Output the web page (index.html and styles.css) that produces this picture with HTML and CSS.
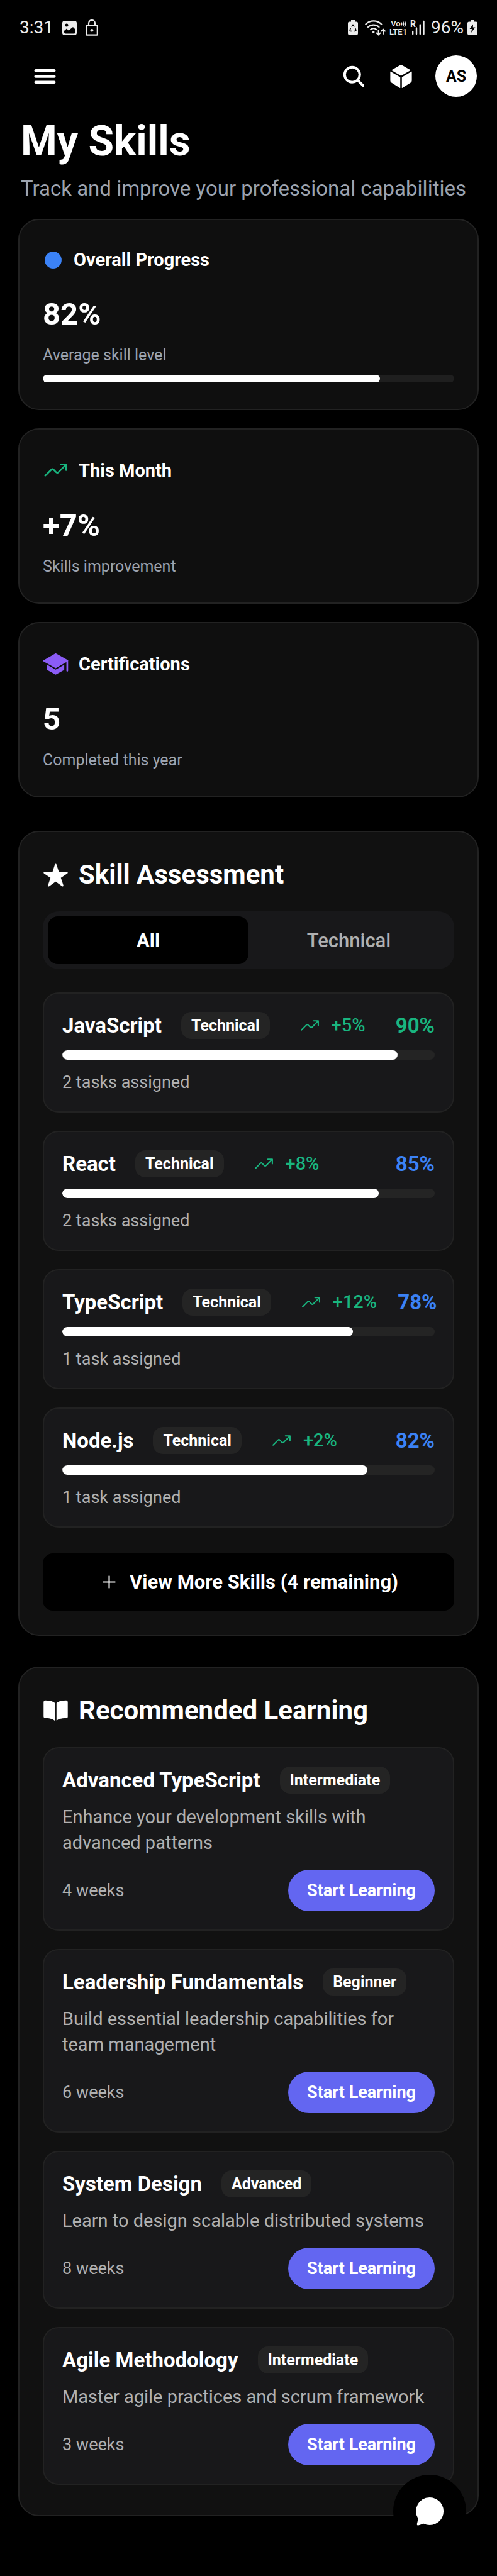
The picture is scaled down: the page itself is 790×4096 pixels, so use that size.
FILE: index.html
```html
<!DOCTYPE html>
<html lang="en">
<head>
<meta charset="utf-8">
<meta name="viewport" content="width=device-width, initial-scale=1">
<title>My Skills</title>
<link rel="stylesheet" href="styles.css">
</head>
<body>
<svg class="defs" aria-hidden="true">
  <symbol id="trend" viewBox="0 0 512 512"><g fill="none" stroke="currentColor" stroke-width="32" stroke-linecap="round" stroke-linejoin="round"><path d="M352 144h112v112"/><path d="M48 368l121.400-121.400a32 32 0 0145.200 0l50.800 50.800a32 32 0 0045.200 0L448 160"/></g></symbol>
</svg>
<div class="app">
  <div class="status">
    <div class="status-group status-left">
      <span class="status-text">3:31</span>
      <svg class="st-photo" viewBox="0 0 23 23"><rect width="23" height="23" rx="4" fill="#ececec"/><circle cx="7" cy="7" r="2.500" fill="#000"/><path d="M3 16l4-3.500 3 3L17 10l4 4v4a2.500 2.500 0 01-2.500 2.500h-13A2.500 2.500 0 013 18z" fill="#000"/></svg>
      <svg class="st-lock" viewBox="0 0 20 26"><rect x="1.200" y="9.700" width="17.600" height="15" rx="1.500" fill="none" stroke="#ececec" stroke-width="2.200"/><path d="M5 9.500V6a5 5 0 0110 0v3.500" fill="none" stroke="#ececec" stroke-width="2.200"/><circle cx="10" cy="17.200" r="2.300" fill="#ececec"/></svg>
    </div>
    <div class="status-group">
      <svg class="st-battery" viewBox="0 0 16 24"><path d="M5 0h6v2.500h2.500A2.500 2.500 0 0116 5v16a2.500 2.500 0 01-2.500 2.500h-11A2.500 2.500 0 010 21V5a2.500 2.500 0 012.500-2.500H5z" fill="#ececec"/><path d="M5.800 10.500L8 7.500l2.200 3M11.500 12.500l1.500 3.500-1.500 1.500H9M7 17.500H4L3 16l1.500-3.500" fill="none" stroke="#000" stroke-width="1.500"/></svg>
      <svg class="st-wifi" viewBox="0 0 33 25"><g fill="none" stroke="#ececec" stroke-width="2.200" stroke-linecap="round"><path d="M1.300 6.500a18 18 0 0125 0M5 11a13 13 0 0117.500 0M9 15a7.500 7.500 0 019.500 0"/><path d="M21.500 16v7M18.500 20.500l3 3 3-3M29 22v-7M26 17.500l3-3 3 3" stroke-width="1.900"/></g><circle cx="13.700" cy="19" r="1.800" fill="#ececec"/></svg>
      <div class="volte"><span class="volte-line">Vo<svg class="st-waves" viewBox="0 0 8 12"><path d="M1 3.500q1.500 2.500 0 5M3.500 2q2.500 4 0 8M6 1q3.200 5 0 10" fill="none" stroke="#ececec" stroke-width="1.300"/></svg></span><span class="volte-line">LTE1</span></div>
      <div class="signal"><span class="roam">R</span><svg class="st-bars" viewBox="0 0 22 24"><path d="M3.200 18v4M9 12.500V22M14.800 7.500V22M20.500 2v20" stroke="#ececec" stroke-width="2.400" stroke-linecap="round"/></svg></div>
      <span class="status-text status-pct">96%</span>
      <svg class="st-battery" viewBox="0 0 16 24"><path d="M5 0h6v2.500h2.500A2.500 2.500 0 0116 5v16a2.500 2.500 0 01-2.500 2.500h-11A2.500 2.500 0 010 21V5a2.500 2.500 0 012.500-2.500H5z" fill="#ececec"/><path d="M9 6.500L3.500 14H7l-1 6 6.500-8.500H8.800z" fill="#000"/></svg>
    </div>
  </div>

  <header class="topbar">
    <button class="icon-btn" aria-label="Menu"><svg class="i49" viewBox="0 0 512 512"><path d="M102 160h308M102 256h308M102 352h308" stroke="#fff" stroke-width="48" stroke-linecap="round"/></svg></button>
    <div class="top-actions">
      <button class="icon-btn" aria-label="Search"><svg class="i41" viewBox="0 0 512 512"><path fill="#fff" d="M456.690 421.390L362.600 327.300a173.810 173.810 0 0034.840-104.580C397.440 126.380 319.060 48 222.720 48S48 126.380 48 222.720s78.380 174.720 174.720 174.720A173.810 173.810 0 00327.300 362.600l94.090 94.090a25 25 0 0035.300-35.300zM97.920 222.720a124.800 124.800 0 11124.800 124.800 124.950 124.950 0 01-124.800-124.800z"/></svg></button>
      <button class="icon-btn" aria-label="Workspace"><svg class="i41" viewBox="0 0 512 512"><path fill="#fff" d="M440.900 136.300a4 4 0 000-6.910L288.160 40.650a64.140 64.140 0 00-64.330 0L71.120 129.390a4 4 0 000 6.910L254 243.880a4 4 0 004.060 0zM238 270.800L48 160a4 4 0 00-6 3.460v177.400a48 48 0 0023.840 41.390L234 487a4 4 0 006-3.460V274.270a4 4 0 00-2-3.470zM274 270.800a4 4 0 00-2 3.460V483.500a4 4 0 006 3.460l168.150-104.700A48 48 0 00470 340.860V163.460a4 4 0 00-6-3.460z"/></svg></button>
      <button class="avatar">AS</button>
    </div>
  </header>

  <main class="content">
    <h1 class="page-title">My Skills</h1>
    <p class="page-sub">Track and improve your professional capabilities</p>

    <div class="stats">
      <section class="card">
        <div class="card-head"><svg class="i33" viewBox="0 0 512 512"><circle cx="256" cy="256" r="208" fill="#3b82f6"/></svg><h2 class="card-title">Overall Progress</h2></div>
        <p class="card-value">82%</p>
        <p class="card-note">Average skill level</p>
        <div class="bar bar-slim" role="progressbar" aria-valuenow="82" aria-label="Overall Progress"><div class="fill" style="width:82%"></div></div>
      </section>
      <section class="card">
        <div class="card-head green"><svg class="i41"><use href="#trend"/></svg><h2 class="card-title">This Month</h2></div>
        <p class="card-value">+7%</p>
        <p class="card-note">Skills improvement</p>
      </section>
      <section class="card">
        <div class="card-head"><svg class="i41" viewBox="0 0 512 512"><g fill="#8b5cf6"><path d="M256 370.430L86 275v102.750l170 93.500 170-93.500V275l-170 95.430z"/><path d="M505 186L256 45.570 4 192q-6 5 0 10l252 142 213-122v172a16 16 0 0034 0V196q4-5 2-10z"/></g></svg><h2 class="card-title">Certifications</h2></div>
        <p class="card-value">5</p>
        <p class="card-note">Completed this year</p>
      </section>
    </div>

    <section class="panel panel-skills">
      <div class="panel-head"><svg class="i41" viewBox="0 0 512 512"><path fill="#fff" d="M394 480a16 16 0 01-9.390-3L256 383.760 127.390 477a16 16 0 01-24.550-18.080L153 310.350 23 221.200a16 16 0 019-29.200h160.380l48.400-148.950a16 16 0 0130.440 0l48.400 149H480a16 16 0 019.050 29.200L359 310.350l50.130 148.530A16 16 0 01394 480z"/></svg><h2 class="panel-title">Skill Assessment</h2></div>
      <div class="tabs" role="tablist">
        <button class="tab tab-on" role="tab" aria-selected="true">All</button>
        <button class="tab" role="tab" aria-selected="false">Technical</button>
      </div>
      <div class="list">
        <article class="item">
          <div class="skill-row"><div class="skill-main"><h3 class="item-title">JavaScript</h3><span class="pill">Technical</span><span class="trend"><svg class="i33s"><use href="#trend"/></svg>+5%</span></div><span class="score green">90%</span></div>
          <div class="bar" role="progressbar" aria-valuenow="90" aria-label="JavaScript"><div class="fill" style="width:90%"></div></div>
          <p class="meta">2 tasks assigned</p>
        </article>
        <article class="item">
          <div class="skill-row"><div class="skill-main"><h3 class="item-title">React</h3><span class="pill">Technical</span><span class="trend"><svg class="i33s"><use href="#trend"/></svg>+8%</span></div><span class="score">85%</span></div>
          <div class="bar" role="progressbar" aria-valuenow="85" aria-label="React"><div class="fill" style="width:85%"></div></div>
          <p class="meta">2 tasks assigned</p>
        </article>
        <article class="item">
          <div class="skill-row"><div class="skill-main"><h3 class="item-title">TypeScript</h3><span class="pill">Technical</span><span class="trend"><svg class="i33s"><use href="#trend"/></svg>+12%</span></div><span class="score">78%</span></div>
          <div class="bar" role="progressbar" aria-valuenow="78" aria-label="TypeScript"><div class="fill" style="width:78%"></div></div>
          <p class="meta">1 task assigned</p>
        </article>
        <article class="item">
          <div class="skill-row"><div class="skill-main"><h3 class="item-title">Node.js</h3><span class="pill">Technical</span><span class="trend"><svg class="i33s"><use href="#trend"/></svg>+2%</span></div><span class="score">82%</span></div>
          <div class="bar" role="progressbar" aria-valuenow="82" aria-label="Node.js"><div class="fill" style="width:82%"></div></div>
          <p class="meta">1 task assigned</p>
        </article>
      </div>
      <button class="more"><svg class="i33s" viewBox="0 0 512 512"><path d="M256 112v288M400 256H112" stroke="#fff" stroke-width="32" stroke-linecap="round"/></svg>View More Skills (4 remaining)</button>
    </section>

    <section class="panel panel-learning">
      <div class="panel-head"><svg class="i41" viewBox="0 0 512 512"><path fill="#fff" d="M202.240 74C166.110 56.750 115.610 48.300 48 48a31.360 31.360 0 00-17.920 5.330A32 32 0 0016 79.900V366c0 19.340 13.760 33.930 32 33.930 71.070 0 142.360 6.640 185.060 47a4.110 4.110 0 006.940-3V106.820a15.890 15.890 0 00-5.460-12A143 143 0 00202.240 74zM481.920 53.300A31.330 31.330 0 00464 48c-67.610.3-118.110 8.710-154.240 26a143.310 143.310 0 00-32.310 20.780 15.930 15.930 0 00-5.450 12v337.130a3.930 3.930 0 006.680 2.810c25.670-25.500 70.720-46.820 185.360-46.810a32 32 0 0032-32v-288a32 32 0 00-14.120-26.610z"/></svg><h2 class="panel-title">Recommended Learning</h2></div>
      <div class="list">
        <article class="item">
          <div class="learn-head"><h3 class="item-title">Advanced TypeScript</h3><span class="pill">Intermediate</span></div>
          <p class="desc">Enhance your development skills with advanced patterns</p>
          <div class="learn-foot"><span class="weeks">4 weeks</span><button class="start">Start Learning</button></div>
        </article>
        <article class="item">
          <div class="learn-head"><h3 class="item-title">Leadership Fundamentals</h3><span class="pill">Beginner</span></div>
          <p class="desc">Build essential leadership capabilities for team management</p>
          <div class="learn-foot"><span class="weeks">6 weeks</span><button class="start">Start Learning</button></div>
        </article>
        <article class="item">
          <div class="learn-head"><h3 class="item-title">System Design</h3><span class="pill">Advanced</span></div>
          <p class="desc">Learn to design scalable distributed systems</p>
          <div class="learn-foot"><span class="weeks">8 weeks</span><button class="start">Start Learning</button></div>
        </article>
        <article class="item">
          <div class="learn-head"><h3 class="item-title">Agile Methodology</h3><span class="pill">Intermediate</span></div>
          <p class="desc">Master agile practices and scrum framework</p>
          <div class="learn-foot"><span class="weeks">3 weeks</span><button class="start">Start Learning</button></div>
        </article>
      </div>
    </section>
  </main>

  <button class="fab" aria-label="Open chat"><svg class="i-chat" viewBox="0 0 44 44"><path fill="#fff" d="M22 0a22 22 0 1 1-9.500 41.800L4 44.500a1.800 1.800 0 0 1-2.200-2.400L3.800 34A22 22 0 0 1 22 0z"/></svg></button>
</div>
</body>
</html>
```
FILE: styles.css
```css
* { box-sizing: border-box; }
body { margin: 0; background: #000; color: #fff; font-family: Roboto, "Liberation Sans", sans-serif; }
h1, h2, h3, p { margin: 0; font-weight: 400; }
button { margin: 0; padding: 0; border: 0; background: none; color: inherit; font: inherit; cursor: pointer; }
svg { display: block; flex: none; }
.defs { position: absolute; width: 0; height: 0; }
.app { position: relative; min-height: 100vh; }
.green { color: #19b57f; }

.i33, .i33s { width: 33px; height: 33px; }
.i41 { width: 41px; height: 41px; }
.i49 { width: 49px; height: 49px; }

/* Device status bar */
.status { display: flex; align-items: center; justify-content: space-between; height: 88px; padding: 0 31px; color: #ececec; }
.status-group { display: flex; align-items: center; gap: 6px; }
.status-left { gap: 14px; }
.status-text { font-size: 28px; line-height: 32px; }
.status-pct { margin-left: 4px; }
.st-photo { width: 23px; height: 23px; }
.st-lock { width: 20px; height: 26px; }
.st-battery { width: 16px; height: 24px; }
.st-wifi { width: 33px; height: 25px; margin-left: 5px; }
.volte { display: flex; flex-direction: column; align-items: center; font-size: 13px; line-height: 13px; font-weight: 500; }
.volte-line { display: flex; align-items: center; }
.st-waves { width: 8px; height: 12px; }
.signal { position: relative; }
.roam { position: absolute; left: -1px; top: -1px; font-size: 14px; line-height: 14px; font-weight: 700; }
.st-bars { width: 22px; height: 24px; }

/* Header */
.topbar { display: flex; align-items: center; justify-content: space-between; height: 66px; padding: 0 32px 0 47px; }
.top-actions { display: flex; align-items: center; gap: 34px; }
.avatar { width: 66px; height: 66px; border-radius: 50%; background: #fff; color: #000; font-size: 25px; font-weight: 700; }

.content { padding: 32px 29px 96px; }
.page-title { padding-left: 4px; font-size: 66px; line-height: 78px; font-weight: 700; }
.page-sub { margin-top: 16px; padding-left: 4px; font-size: 33px; line-height: 40px; color: #9ca3af; }

/* Summary cards */
.stats { display: flex; flex-direction: column; gap: 29px; margin-top: 28px; }
.card { padding: 44px 37px 42px; border: 2px solid #222; border-radius: 33px; background: #0f0f0f; }
.card-head { display: flex; align-items: center; gap: 16px; }
.card-title { font-size: 29px; line-height: 38px; font-weight: 700; color: #fff; }
.card-value { margin-top: 39px; font-size: 49px; line-height: 58px; font-weight: 700; }
.card-note { margin-top: 21px; font-size: 25px; line-height: 30px; color: #9ca3af; }

.bar { height: 15px; border-radius: 8px; background: #242424; overflow: hidden; }
.bar-slim { height: 12px; margin-top: 16px; border-radius: 6px; background: #1f1f1f; }
.fill { height: 100%; border-radius: 8px; background: #fff; }

/* Panels */
.panel { padding: 44px 37px 38px; border: 2px solid #222; border-radius: 33px; background: #111; }
.panel-skills { margin-top: 53px; }
.panel-learning { margin-top: 49px; padding-bottom: 48px; }
.panel-head { display: flex; align-items: center; gap: 16px; margin-bottom: 34px; }
.panel-title { font-size: 42px; line-height: 48px; font-weight: 700; }

.tabs { display: flex; margin-bottom: 37px; padding: 8px; border-radius: 25px; background: #18181a; }
.tab { flex: 1; height: 76px; border-radius: 16px; font-size: 31px; font-weight: 500; color: #b0b0b0; }
.tab-on { background: #000; color: #fff; font-weight: 700; }

.list { display: flex; flex-direction: column; gap: 29px; }
.item { padding: 29px; border: 2px solid #222; border-radius: 25px; background: #18181a; }
.item-title { font-size: 33px; line-height: 43px; font-weight: 700; white-space: nowrap; }
.pill { padding: 0 16px; border-radius: 16px; background: #242424; font-size: 25px; line-height: 43px; font-weight: 700; white-space: nowrap; }

.skill-row { display: flex; justify-content: space-between; margin-bottom: 18px; }
.skill-main { display: flex; align-items: center; gap: 31px; flex: none; margin-right: 33px; }
.trend { display: flex; align-items: center; gap: 18px; padding-left: 16px; font-size: 29px; line-height: 43px; font-weight: 500; color: #19b57f; }
.score { flex: none; font-size: 33px; line-height: 43px; font-weight: 700; color: #3b82f6; }
.score.green { color: #19b57f; }
.meta { margin-top: 20px; font-size: 27px; line-height: 33px; color: #b0b0b0; }

.more { display: flex; align-items: center; justify-content: center; gap: 16px; width: 100%; height: 91px; margin-top: 41px; border-radius: 16px; background: #000; font-size: 31px; font-weight: 700; }

.learn-head { display: flex; align-items: center; gap: 31px; }
.desc { margin-top: 17px; font-size: 29px; line-height: 41px; color: #b0b0b0; }
.learn-foot { display: flex; align-items: center; justify-content: space-between; margin-top: 22px; }
.weeks { font-size: 27px; line-height: 33px; color: #b0b0b0; }
.start { height: 66px; padding: 0 30px; border-radius: 33px; background: #6366f1; font-size: 27px; font-weight: 700; }

/* Floating chat button */
.fab { position: absolute; right: 49px; bottom: 46px; display: flex; align-items: center; justify-content: center; width: 116px; height: 116px; border-radius: 50%; background: #000; }
.i-chat { width: 44px; height: 44px; overflow: visible; }
```
